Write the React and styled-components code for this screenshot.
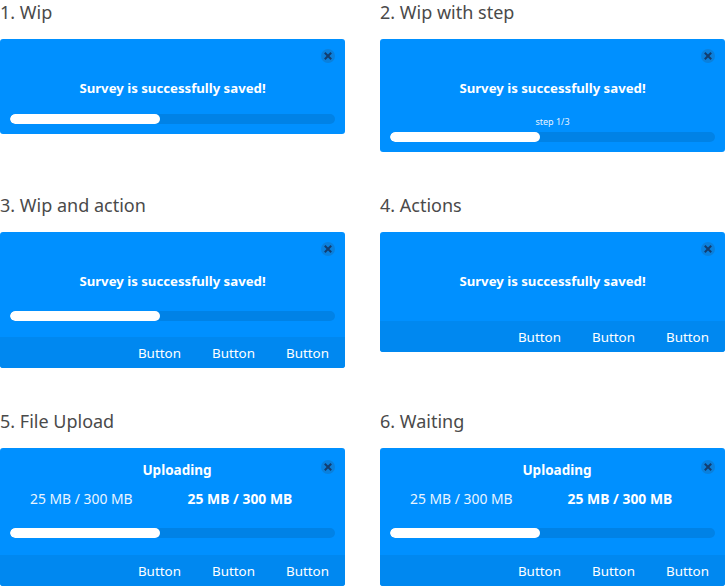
import React from 'react'
import styled, { createGlobalStyle } from 'styled-components'

const GlobalStyle = createGlobalStyle`
	body {
		margin: 0;
		background: #ffffff;
		font-family: 'Noto Sans', 'Lato', sans-serif;
	}
`

const Grid = styled.div`
	display: grid;
	grid-template-columns: 345px 345px;
	column-gap: 35px;
	row-gap: 41px;
	align-items: start;
	width: 725px;
`

const Section = styled.section`
	display: flex;
	flex-direction: column;
`

const Title = styled.h2`
	margin: 0 0 15px;
	height: 24px;
	line-height: 24px;
	font-size: 18px;
	font-weight: 400;
	color: #4a4a4a;
`

const Card = styled.div`
	position: relative;
	background: #0090ff;
	border-radius: 3px;
	overflow: hidden;
	color: #ffffff;
`

const Body = styled.div`
	display: flex;
	flex-direction: column;
	padding: ${props => props.pad || '40px 10px 10px'};
`

const Message = styled.div`
	text-align: center;
	font-size: 13.2px;
	font-weight: 700;
	line-height: 18px;
`

const Step = styled.div`
	margin-top: ${props => props.top || 19}px;
	text-align: center;
	font-size: 9px;
	line-height: 12px;
	color: #e6f3ff;
`

const Track = styled.div`
	margin-top: ${props => props.top || 0}px;
	height: 10px;
	border-radius: 5px;
	background: #0082e6;
	overflow: hidden;
`

const Fill = styled.div`
	height: 100%;
	border-radius: 5px;
	background: #ffffff;
`

const Close = styled.button`
	position: absolute;
	top: ${props => props.top || 10}px;
	right: 10px;
	width: 14px;
	height: 14px;
	padding: 0;
	border: none;
	border-radius: 50%;
	background: #0a80dd;
	display: flex;
	align-items: center;
	justify-content: center;
	cursor: pointer;
`

const Footer = styled.div`
	display: flex;
	justify-content: flex-end;
	align-items: center;
	gap: 31px;
	height: 31px;
	padding-right: 16px;
	background: #0088f0;
`

const FooterButton = styled.button`
	padding: 0;
	border: none;
	background: none;
	color: #ffffff;
	font-family: inherit;
	font-size: 13.4px;
	cursor: pointer;
`

const Heading = styled.div`
	padding-left: 9px;
	text-align: center;
	font-size: 13.5px;
	font-weight: 700;
	line-height: 18px;
`

const Sizes = styled.div`
	display: flex;
	gap: 55px;
	margin-top: 11px;
	padding-left: 20px;
	font-size: 13.9px;
	line-height: 18px;
`

const Size = styled.span`
	font-weight: ${props => (props.bold ? 700 : 400)};
	color: ${props => (props.bold ? '#ffffff' : '#eaf5ff')};
`

const CloseButton = ({ top }) => (
	<Close top={top} aria-label="close">
		<svg width="8" height="8" viewBox="0 0 8 8">
			<path d="M1.5 1.5 L6.5 6.5 M6.5 1.5 L1.5 6.5" stroke="#123d70" strokeWidth="2" strokeLinecap="square" />
		</svg>
	</Close>
)

const Progress = ({ value, top }) => (
	<Track top={top}>
		<Fill style={{ width: `${value}%` }} />
	</Track>
)

const Actions = () => (
	<Footer>
		{['Button', 'Button', 'Button'].map((label, i) => (
			<FooterButton key={i}>{label}</FooterButton>
		))}
	</Footer>
)

const Upload = () => (
	<Card>
		<CloseButton top={12} />
		<Body pad="13px 10px 17px">
			<Heading>Uploading</Heading>
			<Sizes>
				<Size>25 MB / 300 MB</Size>
				<Size bold>25 MB / 300 MB</Size>
			</Sizes>
			<Progress value={46} top={20} />
		</Body>
		<Actions />
	</Card>
)

const App = () => (
	<>
		<GlobalStyle />
		<Grid>
			<Section>
				<Title>1. Wip</Title>
				<Card>
					<CloseButton />
					<Body>
						<Message>Survey is successfully saved!</Message>
						<Progress value={46} top={17} />
					</Body>
				</Card>
			</Section>
			<Section>
				<Title>2. Wip with step</Title>
				<Card>
					<CloseButton />
					<Body>
						<Message>Survey is successfully saved!</Message>
						<Step>step 1/3</Step>
						<Progress value={46} top={4} />
					</Body>
				</Card>
			</Section>
			<Section>
				<Title>3. Wip and action</Title>
				<Card>
					<CloseButton />
					<Body pad="40px 10px 16px">
						<Message>Survey is successfully saved!</Message>
						<Progress value={46} top={21} />
					</Body>
					<Actions />
				</Card>
			</Section>
			<Section>
				<Title>4. Actions</Title>
				<Card>
					<CloseButton />
					<Body pad="40px 10px 31px">
						<Message>Survey is successfully saved!</Message>
					</Body>
					<Actions />
				</Card>
			</Section>
			<Section>
				<Title>5. File Upload</Title>
				<Upload />
			</Section>
			<Section>
				<Title>6. Waiting</Title>
				<Upload />
			</Section>
		</Grid>
	</>
)

export default App
